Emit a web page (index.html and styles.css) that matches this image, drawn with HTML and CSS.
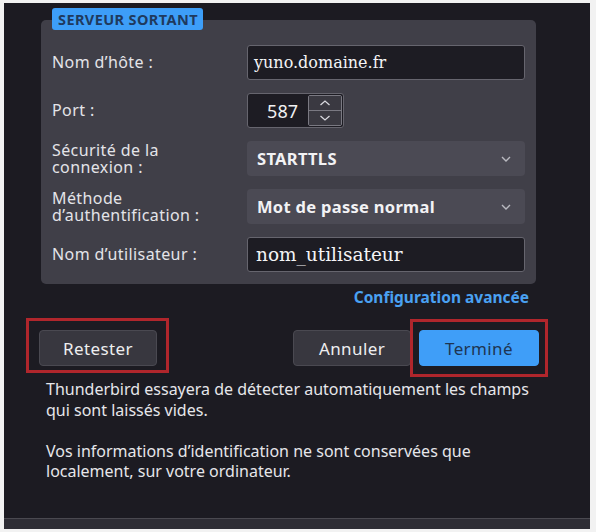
FILE: index.html
```html
<!DOCTYPE html>
<html lang="fr">
<head>
<meta charset="utf-8">
<link rel="stylesheet" href="styles.css">
</head>
<body>
<div class="window">
  <div class="content">
    <div class="group">
      <div class="legend">SERVEUR SORTANT</div>
      <div class="panel">
        <div class="label">Nom d’hôte :</div>
        <div class="input text">yuno.domaine.fr</div>

        <div class="label">Port :</div>
        <div class="port">
          <span class="port-value">587</span>
          <span class="spin">
            <span class="spin-btn"><svg width="12" height="8" viewBox="0 0 12 8"><path d="M1.5 6 L6 2 L10.5 6" fill="none" stroke="#d8d8de" stroke-width="1.3"/></svg></span>
            <span class="spin-btn"><svg width="12" height="8" viewBox="0 0 12 8"><path d="M1.5 2 L6 6 L10.5 2" fill="none" stroke="#d8d8de" stroke-width="1.3"/></svg></span>
          </span>
        </div>

        <div class="label">Sécurité de la<br>connexion :</div>
        <div class="select"><span>STARTTLS</span><svg width="12" height="8" viewBox="0 0 12 8"><path d="M2 2 L6 6 L10 2" fill="none" stroke="#b9b9c0" stroke-width="1.4"/></svg></div>

        <div class="label">Méthode<br>d’authentification :</div>
        <div class="select"><span>Mot de passe normal</span><svg width="12" height="8" viewBox="0 0 12 8"><path d="M2 2 L6 6 L10 2" fill="none" stroke="#b9b9c0" stroke-width="1.4"/></svg></div>

        <div class="label">Nom d’utilisateur :</div>
        <div class="input text user">nom_utilisateur</div>
      </div>
    </div>

    <div class="adv"><span class="link">Configuration avancée</span></div>

    <div class="buttons">
      <button class="btn">Retester</button>
      <div class="spacer"></div>
      <button class="btn">Annuler</button>
      <button class="btn primary">Terminé</button>
      <span class="mark mark-left"></span>
      <span class="mark mark-right"></span>
    </div>

    <div class="notes">
      <p>Thunderbird essayera de détecter automatiquement les champs qui sont laissés vides.</p>
      <p>Vos informations d’identification ne sont conservées que localement, sur votre ordinateur.</p>
    </div>
  </div>
</div>
<div class="statusbar"></div>
</body>
</html>
```

FILE: styles.css
```css
html, body {
  margin: 0;
  padding: 0;
}
body {
  background: #f2f2f2;
  padding: 3px 6px 0 4px;
  width: 586px;
  font-family: "Noto Sans", "Open Sans", sans-serif;
  color: #ececef;
}
.window {
  background: #1c1b22;
  height: 515px;
  overflow: hidden;
}
.statusbar {
  height: 10px;
  background: #2e2d35;
  border-top: 1px solid #4a4950;
}
.content {
  padding: 5px 0 0 35px;
}
.group {
  display: flex;
  flex-direction: column;
}
.legend {
  position: relative;
  z-index: 1;
  align-self: flex-start;
  margin-left: 13px;
  height: 22px;
  line-height: 22px;
  padding: 0 5px 0 6px;
  background: #3d9ef8;
  color: #1f3a5e;
  font-weight: 700;
  font-size: 14.5px;
  letter-spacing: 0.4px;
  border-radius: 3px;
}
.panel {
  margin: -10px 0 0 2px;
  width: 473px;
  padding: 25px 11px 12px 11px;
  background: #403f48;
  border-radius: 5px;
  display: grid;
  grid-template-columns: 195px 278px;
  grid-auto-rows: 35px;
  row-gap: 13px;
  align-items: center;
}
.label {
  font-size: 16px;
  letter-spacing: 0.4px;
  line-height: 16.5px;
  color: #e4e4e8;
}
.input {
  box-sizing: border-box;
  height: 35px;
  background: #1d1c23;
  border: 1px solid #66656e;
  border-radius: 3px;
  display: flex;
  align-items: center;
}
.text {
  font-family: "DejaVu Serif", serif;
  font-size: 16px;
  color: #f4f4f6;
  padding-left: 6px;
}
.user {
  font-size: 18.5px;
  padding-left: 8px;
}
.port {
  box-sizing: border-box;
  width: 97px;
  height: 35px;
  background: #1d1c23;
  border: 1px solid #66656e;
  border-radius: 3px;
  display: flex;
  align-items: stretch;
}
.port-value {
  flex: 1;
  display: flex;
  align-items: center;
  justify-content: flex-end;
  padding-right: 10px;
  font-size: 18px;
  color: #f0f0f2;
}
.spin {
  width: 32px;
  margin: 1px 1px 1px 0;
  display: flex;
  flex-direction: column;
  border: 1px solid #7a7982;
  border-radius: 2px;
}
.spin-btn {
  flex: 1;
  display: flex;
  align-items: center;
  justify-content: center;
  background: #3a3941;
}
.spin-btn + .spin-btn {
  border-top: 1px solid #7a7982;
}
.select {
  box-sizing: border-box;
  height: 35px;
  background: #4b4a54;
  border-radius: 4px;
  display: flex;
  align-items: center;
  justify-content: space-between;
  padding: 0 13px 0 10px;
  font-size: 16.5px;
  letter-spacing: 0.3px;
  font-weight: 700;
  color: #f2f2f4;
}
.adv {
  width: 490px;
  margin-top: 4px;
  display: flex;
  justify-content: flex-end;
}
.link {
  font-size: 15.5px;
  font-weight: 700;
  color: #4aa1f2;
  line-height: 19px;
}
.buttons {
  position: relative;
  width: 500px;
  margin-top: 23px;
  display: flex;
  gap: 8px;
}
.spacer {
  flex: 1;
}
.btn {
  width: 118px;
  height: 36px;
  border: 1px solid #4a4951;
  border-radius: 4px;
  background: #38373f;
  color: #eeeef0;
  font-family: "Noto Sans", "Open Sans", sans-serif;
  font-size: 17px;
  letter-spacing: 0.4px;
  padding: 0;
}
.primary {
  width: 120px;
  background: #3f9ef8;
  border-color: #3f9ef8;
  color: #1e3552;
}
.mark {
  position: absolute;
  border: 3px solid #b0262c;
  box-sizing: border-box;
}
.mark-left {
  left: -13px;
  top: -12px;
  width: 143px;
  height: 55px;
}
.mark-right {
  left: 371px;
  top: -11px;
  width: 138px;
  height: 58px;
}
.notes {
  margin-top: 13px;
  padding-left: 7px;
  width: 488px;
  font-size: 16px;
  line-height: 20.5px;
  color: #e6e6ea;
}
.notes p {
  margin: 0 0 20.5px 0;
}
```
